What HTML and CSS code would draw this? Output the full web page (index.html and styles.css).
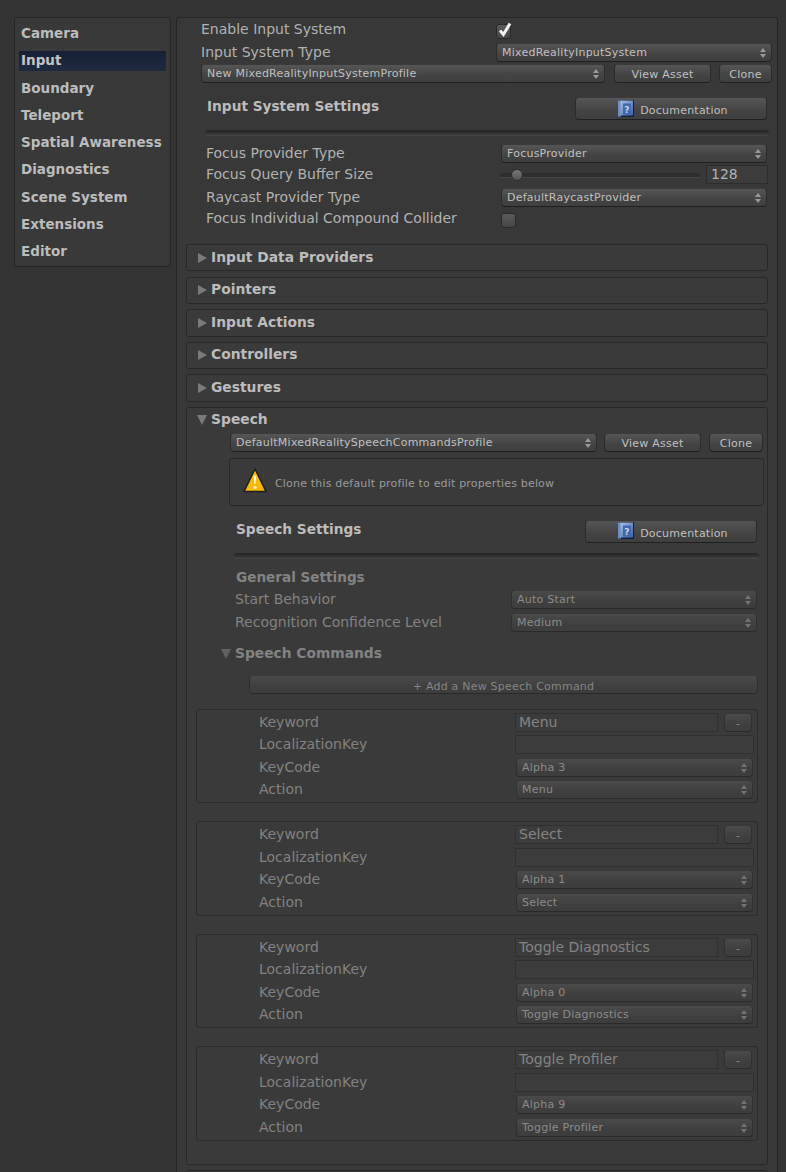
FILE: index.html
```html
<!DOCTYPE html>
<html lang="en">
<head>
    <meta charset="UTF-8">
    <title>Mixed Reality Toolkit Inspector</title>
    <link rel="stylesheet" href="styles.css">
</head>
<body>
    <svg class="defs" width="0" height="0">
        <defs>
            <linearGradient id="book" x1="0" y1="0" x2="1" y2="1">
                <stop offset="0" stop-color="#a9c2e6"/>
                <stop offset="1" stop-color="#3a62a4"/>
            </linearGradient>
            <symbol id="doc-icon" viewBox="0 0 16 17">
                <rect x="1" y="0" width="15" height="17" fill="#14203a"/>
                <rect x="0" y="0.5" width="3" height="16" fill="#6d8fc4"/>
                <rect x="2.5" y="0.5" width="12.5" height="15" fill="url(#book)"/>
                <rect x="5" y="3.5" width="8" height="11" fill="#3f68ad"/>
                <text x="9" y="12.5" class="doc-q">?</text>
            </symbol>
        </defs>
    </svg>

    <div class="page">
        <nav class="sidebar">
            <div class="nav-item">Camera</div>
            <div class="nav-item active">Input</div>
            <div class="nav-item">Boundary</div>
            <div class="nav-item">Teleport</div>
            <div class="nav-item">Spatial Awareness</div>
            <div class="nav-item">Diagnostics</div>
            <div class="nav-item">Scene System</div>
            <div class="nav-item">Extensions</div>
            <div class="nav-item">Editor</div>
        </nav>

        <main class="inspector">
            <section class="top-fields">
                <div class="row first-row">
                    <span class="label top-label">Enable Input System</span>
                    <span class="checkbox checked">
                        <svg width="15" height="15" viewBox="0 0 15 15"><path d="M3 7.5 L6.4 11.5 L13 0.5" fill="none" stroke="#f4f4f4" stroke-width="3"/></svg>
                    </span>
                </div>
                <div class="row type-row">
                    <span class="label top-label">Input System Type</span>
                    <div class="dropdown">MixedRealityInputSystem</div>
                </div>
                <div class="row profile-row">
                    <div class="dropdown">New MixedRealityInputSystemProfile</div>
                    <button class="btn view-asset">View Asset</button>
                    <button class="btn clone">Clone</button>
                </div>
            </section>

            <section class="settings">
                <div class="settings-head">
                    <h2 class="settings-title">Input System Settings</h2>
                    <button class="btn doc-btn"><svg width="16" height="17"><use href="#doc-icon"/></svg><span class="doc-text">Documentation</span></button>
                </div>
                <div class="separator"></div>
                <div class="row focus-first">
                    <span class="label focus-label">Focus Provider Type</span>
                    <div class="dropdown">FocusProvider</div>
                </div>
                <div class="row focus-query">
                    <span class="label focus-label">Focus Query Buffer Size</span>
                    <div class="slider"><span class="slider-thumb"></span></div>
                    <div class="number-field">128</div>
                </div>
                <div class="row focus-raycast">
                    <span class="label focus-label">Raycast Provider Type</span>
                    <div class="dropdown">DefaultRaycastProvider</div>
                </div>
                <div class="row focus-collider">
                    <span class="label focus-label">Focus Individual Compound Collider</span>
                    <span class="checkbox"></span>
                </div>
            </section>

            <div class="foldout first-foldout"><span class="arrow-right"></span>Input Data Providers</div>
            <div class="foldout"><span class="arrow-right"></span>Pointers</div>
            <div class="foldout"><span class="arrow-right"></span>Input Actions</div>
            <div class="foldout"><span class="arrow-right"></span>Controllers</div>
            <div class="foldout"><span class="arrow-right"></span>Gestures</div>

            <section class="speech">
                <div class="speech-title"><span class="arrow-down"></span>Speech</div>
                <div class="row speech-profile">
                    <div class="dropdown">DefaultMixedRealitySpeechCommandsProfile</div>
                    <button class="btn view-asset">View Asset</button>
                    <button class="btn clone">Clone</button>
                </div>
                <div class="help-box">
                    <svg class="warn-icon" width="24" height="25" viewBox="0 0 24 25">
                        <path d="M12 1 L23 23.5 L1 23.5 Z" fill="#fdb900" stroke="#1e1e1e" stroke-width="1.6" stroke-linejoin="round"/>
                        <path d="M10.7 7.5 H13.3 L12.7 16 H11.3 Z" fill="#fff6dc"/>
                        <circle cx="12" cy="19.4" r="1.6" fill="#fff6dc"/>
                    </svg>
                    <span class="help-text">Clone this default profile to edit properties below</span>
                </div>
                <div class="settings-head speech-head">
                    <h2 class="settings-title">Speech Settings</h2>
                    <button class="btn doc-btn"><svg width="16" height="17"><use href="#doc-icon"/></svg><span class="doc-text">Documentation</span></button>
                </div>
                <div class="separator speech-sep"></div>

                <div class="disabled">
                    <h3 class="general-title">General Settings</h3>
                    <div class="row general-row">
                        <span class="label general-label">Start Behavior</span>
                        <div class="dropdown">Auto Start</div>
                    </div>
                    <div class="row general-row second">
                        <span class="label general-label">Recognition Confidence Level</span>
                        <div class="dropdown">Medium</div>
                    </div>
                    <div class="commands-title"><span class="arrow-down"></span>Speech Commands</div>
                    <button class="btn add-btn">+ Add a New Speech Command</button>

                    <div class="card first-card">
                        <div class="row card-row"><span class="label card-label">Keyword</span><div class="text-field">Menu</div><button class="btn minus">-</button></div>
                        <div class="row card-row"><span class="label card-label">LocalizationKey</span><div class="text-field wide"></div></div>
                        <div class="row card-row"><span class="label card-label">KeyCode</span><div class="dropdown">Alpha 3</div></div>
                        <div class="row card-row"><span class="label card-label">Action</span><div class="dropdown">Menu</div></div>
                    </div>
                    <div class="card">
                        <div class="row card-row"><span class="label card-label">Keyword</span><div class="text-field">Select</div><button class="btn minus">-</button></div>
                        <div class="row card-row"><span class="label card-label">LocalizationKey</span><div class="text-field wide"></div></div>
                        <div class="row card-row"><span class="label card-label">KeyCode</span><div class="dropdown">Alpha 1</div></div>
                        <div class="row card-row"><span class="label card-label">Action</span><div class="dropdown">Select</div></div>
                    </div>
                    <div class="card">
                        <div class="row card-row"><span class="label card-label">Keyword</span><div class="text-field">Toggle Diagnostics</div><button class="btn minus">-</button></div>
                        <div class="row card-row"><span class="label card-label">LocalizationKey</span><div class="text-field wide"></div></div>
                        <div class="row card-row"><span class="label card-label">KeyCode</span><div class="dropdown">Alpha 0</div></div>
                        <div class="row card-row"><span class="label card-label">Action</span><div class="dropdown">Toggle Diagnostics</div></div>
                    </div>
                    <div class="card">
                        <div class="row card-row"><span class="label card-label">Keyword</span><div class="text-field">Toggle Profiler</div><button class="btn minus">-</button></div>
                        <div class="row card-row"><span class="label card-label">LocalizationKey</span><div class="text-field wide"></div></div>
                        <div class="row card-row"><span class="label card-label">KeyCode</span><div class="dropdown">Alpha 9</div></div>
                        <div class="row card-row"><span class="label card-label">Action</span><div class="dropdown">Toggle Profiler</div></div>
                    </div>
                </div>
            </section>
            <div class="foldout next-foldout"></div>
        </main>
    </div>
</body>
</html>
```

FILE: styles.css
```css
* { box-sizing: border-box; }

html, body { height: 100%; }

body {
    margin: 0;
    height: 1172px;
    overflow: hidden;
    background: #343434;
    color: #b4b4b4;
    font-family: "DejaVu Sans", Verdana, sans-serif;
    font-size: 14px;
}

.defs { position: absolute; }
.doc-q { font-size: 9px; font-weight: bold; fill: #c8d8ee; text-anchor: middle; }

.page {
    display: flex;
    align-items: flex-start;
    padding: 17px 0 0 14px;
    gap: 5px;
}

/* left nav */
.sidebar {
    width: 157px;
    height: 250px;
    flex: none;
    padding: 6px 4px 0;
    background: #393939;
    border: 1px solid #262626;
    border-radius: 3px;
}
.nav-item {
    height: 20px;
    margin-bottom: 7.25px;
    padding-left: 2px;
    font-weight: bold;
    font-size: 13.5px;
    line-height: 18px;
    color: #bcbcbc;
    white-space: nowrap;
}
.nav-item.active {
    background: linear-gradient(#172036, #1f2a40);
    color: #c4c4c4;
}

/* inspector */
.inspector {
    width: 602px;
    height: 1155px;
    flex: none;
    padding: 0 9px;
    background: #383838;
    border: 1px solid #262626;
    border-bottom: none;
    border-radius: 3px 3px 0 0;
}

.row {
    display: flex;
    align-items: center;
    height: 19px;
}
.label { flex: none; white-space: nowrap; color: #b2b2b2; }

.top-fields { margin-left: 15px; width: 571px; }
.first-row { margin-top: 2px; }
.type-row { margin-top: 4px; }
.profile-row { margin-top: 2px; }
.top-label { width: 295px; margin-bottom: 2px; }

.dropdown {
    position: relative;
    flex: 1;
    min-width: 0;
    height: 19px;
    padding-left: 5px;
    font-size: 11px;
    letter-spacing: 0.24px;
    line-height: 17px;
    color: #c0c0c0;
    background: linear-gradient(#565656, #434343 60%, #3f3f3f);
    border: 1px solid #2b2b2b;
    border-top-color: #3a3a3a;
    border-bottom-color: #202020;
    border-radius: 4px;
    white-space: nowrap;
}
/* up/down arrows */
.dropdown::before,
.dropdown::after {
    content: "";
    position: absolute;
    right: 5px;
    border-left: 3px solid transparent;
    border-right: 3px solid transparent;
}
.dropdown::before { top: 4px; border-bottom: 4px solid #999; }
.dropdown::after { top: 10px; border-top: 4px solid #999; }

.btn {
    height: 19px;
    padding: 2px 0 0;
    font-family: inherit;
    font-size: 11px;
    letter-spacing: 0.22px;
    color: #c0c0c0;
    background: linear-gradient(#565656, #434343 60%, #3f3f3f);
    border: 1px solid #2b2b2b;
    border-top-color: #3a3a3a;
    border-bottom-color: #202020;
    border-radius: 4px;
}
.view-asset { width: 97px; margin-left: 9px; flex: none; }
.clone { width: 53px; margin-left: 8px; flex: none; }

.checkbox {
    display: block;
    width: 15px;
    height: 15px;
    flex: none;
    margin-top: 4px;
    background: linear-gradient(#5a5a5a, #464646);
    border: 1px solid #2a2a2a;
    border-radius: 3px;
}
.checkbox svg { display: block; margin: -2px 0 0 0; overflow: visible; }

/* settings block */
.settings { margin-left: 19px; width: 564px; }
.settings-head {
    display: flex;
    justify-content: space-between;
    align-items: center;
    height: 23px;
    margin-top: 14px;
    padding-left: 2px;
}
.settings-title {
    margin: 0 0 5px;
    font-size: 13.7px;
    font-weight: bold;
    color: #bcbcbc;
}
.doc-btn {
    display: flex;
    justify-content: center;
    align-items: center;
    gap: 6px;
    width: 192px;
    height: 23px;
    margin-right: 2px;
    padding: 0 0 0 4px;
    flex: none;
}
.doc-btn svg { margin-top: -1px; }
.doc-text { margin-top: 3px; }
.speech-head .doc-text { margin-top: 5px; }
.separator {
    height: 6px;
    margin-top: 10px;
    background: linear-gradient(#242424, #303030 50%, #474747);
    border-radius: 3px;
}
.focus-first { margin-top: 8px; }
.focus-query { margin-top: 2px; }
.focus-raycast { margin-top: 4px; }
.focus-collider { margin-top: 2px; }
.focus-label { width: 296px; padding-left: 1px; margin-bottom: 2px; }
.settings .dropdown { margin-right: 2px; }

.slider {
    position: relative;
    flex: none;
    width: 200px;
    height: 5px;
    margin: 2px 0 0 -1px;
    background: #2e2e2e;
    border-bottom: 1px solid #454545;
    border-radius: 3px;
}
.slider-thumb {
    position: absolute;
    top: -4px;
    left: 11px;
    width: 12px;
    height: 12px;
    background: linear-gradient(#7a7a7a, #525252);
    border: 1px solid #2c2c2c;
    border-radius: 50%;
}
.number-field {
    width: 62px;
    height: 19px;
    margin-left: 6px;
    padding-left: 4px;
    font-size: 14px;
    line-height: 17px;
    background: #3c3c3c;
    border: 1px solid #2c2c2c;
}

/* foldouts */
.foldout {
    display: flex;
    align-items: center;
    height: 27.4px;
    margin-top: 5.2px;
    padding: 0 0 2px 11px;
    font-size: 13.85px;
    font-weight: bold;
    color: #bcbcbc;
    background: #3a3a3a;
    border: 1px solid #282828;
    border-radius: 3px;
}
.first-foldout { margin-top: 16px; }
.next-foldout { margin-top: 5px; }

.arrow-right {
    width: 0;
    height: 0;
    margin: 2px 4px 0 0;
    border-top: 5.5px solid transparent;
    border-bottom: 5.5px solid transparent;
    border-left: 9px solid #7a7a7a;
}
.arrow-down {
    width: 0;
    height: 0;
    margin: 2px 4px 0 0;
    border-left: 5px solid transparent;
    border-right: 5px solid transparent;
    border-top: 10px solid #7a7a7a;
}

/* speech section */
.speech {
    height: 758px;
    margin-top: 5.2px;
    background: #3a3a3a;
    border: 1px solid #282828;
    border-radius: 3px;
}
.speech-title {
    display: flex;
    align-items: center;
    height: 20px;
    margin-top: 2px;
    padding: 0 0 2px 10px;
    font-size: 13.85px;
    font-weight: bold;
    color: #bcbcbc;
}
.speech-profile { margin: 3px 4px 0 43px; }
.speech-profile .clone { width: 54px; }
.speech-profile .view-asset { margin-left: 7px; }

.help-box {
    display: flex;
    align-items: center;
    gap: 8px;
    height: 48px;
    margin: 6px 3px 0 42px;
    padding-left: 13px;
    font-size: 11px;
    letter-spacing: 0.18px;
    color: #9a9a9a;
    border: 1px solid #282828;
    border-radius: 3px;
}
.warn-icon { margin-top: -2px; }
.help-text { margin-top: 3px; }
.speech-head {
    margin: 14px 10px 0 49px;
    padding-left: 0;
}
.speech-head .doc-btn { width: 172px; margin-right: 0; }
.speech-sep { margin: 10px 8px 0 47px; }

.disabled { opacity: 0.6; }
.general-title {
    margin: 9px 0 0 49px;
    height: 18px;
    font-size: 13.6px;
    font-weight: bold;
    line-height: 18px;
}
.general-row { margin: 4px 10px 0 48px; }
.general-row.second { margin-top: 4px; }
.general-label { width: 276px; }

.commands-title {
    display: flex;
    align-items: center;
    height: 20px;
    margin: 11px 0 0 34px;
    font-size: 13.8px;
    font-weight: bold;
}
.add-btn {
    display: block;
    width: 509px;
    margin: 12px 0 0 62px;
    padding-top: 4px;
    color: #b8b8b8;
}

.card {
    width: 562px;
    height: 94.5px;
    margin: 18px 0 0 9px;
    padding: 3px 2px 0 62px;
    border: 1px solid #222;
    border-radius: 3px;
}
.first-card { margin-top: 15px; }
.card-row { margin-bottom: 3.4px; }
.card-label { width: 256px; margin-bottom: 0.8px; }
.card .dropdown { margin: 0 2px 0 1px; }
.text-field {
    width: 203px;
    height: 19px;
    padding-left: 3px;
    font-size: 14px;
    line-height: 17px;
    background: #3e3e3e;
    border: 1px solid #2a2a2a;
    white-space: nowrap;
}
.text-field.wide { width: 239px; }
.minus { width: 28px; margin-left: 6px; flex: none; }
```
